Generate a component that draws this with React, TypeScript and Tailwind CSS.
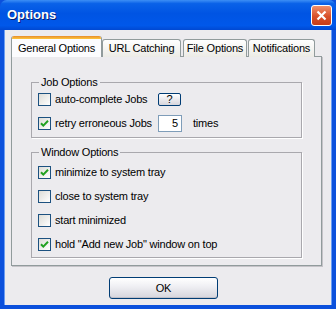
import React from 'react';

const font = { fontFamily: '"Liberation Sans", Arial, sans-serif' };

const Check: React.FC<{ checked?: boolean }> = ({ checked }) => (
  <span className="flex h-[13px] w-[13px] shrink-0 items-center justify-center border border-[#1c5180] bg-[linear-gradient(135deg,#dcdcd7_0%,#ffffff_100%)]">
    {checked && (
      <svg width="9" height="9" viewBox="0 0 9 9">
        <path d="M1 4.2 L3.3 6.6 L8 1.8" stroke="#21a121" strokeWidth="2" fill="none" />
      </svg>
    )}
  </span>
);

const Row: React.FC<{ checked?: boolean; label: string; children?: React.ReactNode }> = ({ checked, label, children }) => (
  <div className="flex h-[20px] items-center">
    <Check checked={checked} />
    <span className="ml-[4px] w-[103px] whitespace-nowrap">{label}</span>
    {children}
  </div>
);

const Tab: React.FC<{ label: string; width: string }> = ({ label, width }) => (
  <div className={`${width} flex h-[18px] items-center justify-center rounded-t-[3px] border border-b-0 border-[#919b9c] bg-[linear-gradient(#ffffff,#ecebe6)]`}>
    {label}
  </div>
);

export default function App() {
  return (
    <div className="flex h-[309px] w-[336px] flex-col bg-[#0b50dc] text-[11px] tracking-[-0.2px] text-black" style={font}>
      {/* title bar */}
      <div className="flex h-[30px] shrink-0 items-center justify-between rounded-t-[7px] bg-[linear-gradient(#3d8ff5_0%,#0a62e8_12%,#0054e3_45%,#0058ea_85%,#0048d2_100%)] pl-[7px] pr-[4px]">
        <span className="text-[13px] font-bold tracking-normal text-white [text-shadow:1px_1px_0_#0a1f6e]">Options</span>
        <div className="flex h-[21px] w-[21px] items-center justify-center rounded-[3px] border border-white bg-[linear-gradient(#f0906c,#d8502a_55%,#c63d1a)]">
          <svg width="11" height="11" viewBox="0 0 11 11">
            <path d="M1.5 1.5 L9.5 9.5 M9.5 1.5 L1.5 9.5" stroke="#fff" strokeWidth="2.2" />
          </svg>
        </div>
      </div>

      {/* body */}
      <div className="mx-[4px] mb-[4px] flex flex-1 flex-col border-l border-r border-[#6a9cf2] bg-[#ecebee] pl-[6px] pr-[9px] pt-[6px]">
        {/* tabs */}
        <div className="relative z-10 -mb-px flex h-[21px] items-end">
          <div className="flex h-[21px] w-[91px] flex-col overflow-hidden rounded-t-[3px] border-x border-[#919b9c] bg-[#fcfcfe]">
            <div className="h-[3px] bg-[linear-gradient(#e68b2c,#ffc83c)]" />
            <div className="flex flex-1 items-center justify-center">General Options</div>
          </div>
          <Tab label="URL Catching" width="w-[79px]" />
          <div className="w-[2px]" />
          <Tab label="File Options" width="w-[64px]" />
          <div className="w-[1px]" />
          <Tab label="Notifications" width="w-[67px]" />
        </div>

        {/* panel */}
        <div className="flex flex-col border border-[#919b9c] bg-[#ecebee] px-[19px] pb-[7px] pt-[19px] shadow-[1px_1px_0_#c5c3c8]">
          <fieldset className="border border-[#a9a8ad] px-[6px] pb-[4px] shadow-[1px_1px_0_#ffffff]">
            <legend className="ml-[1px] px-[2px] leading-[13px]">Job Options</legend>
            <Row label="auto-complete Jobs">
              <div className="flex h-[13px] w-[23px] items-center justify-center rounded-[2px] border border-[#003c74] bg-[linear-gradient(#ffffff,#d6d5dc)] text-[11px] leading-none">
                ?
              </div>
            </Row>
            <div className="mt-[4px]">
              <Row checked label="retry erroneous Jobs">
                <div className="flex h-[17px] w-[24px] items-center justify-end border border-[#7f9db9] bg-white pr-[3px]">5</div>
                <span className="ml-[11px]">times</span>
              </Row>
            </div>
          </fieldset>

          <fieldset className="mt-[8px] flex flex-col gap-[4px] border border-[#a9a8ad] px-[6px] pb-[3px] pt-[3px] shadow-[1px_1px_0_#ffffff]">
            <legend className="ml-[1px] px-[2px] leading-[13px]">Window Options</legend>
            <Row checked label="minimize to system tray" />
            <Row label="close to system tray" />
            <Row label="start minimized" />
            <Row checked label={'hold "Add new Job" window on top'} />
          </fieldset>
        </div>

        {/* footer */}
        <div className="flex flex-1 items-start justify-center pr-[6px] pt-[11px]">
          <div className="flex h-[22px] w-[109px] items-center justify-center rounded-[3px] border border-[#003c74] bg-[linear-gradient(#ffffff_0%,#f0f0f4_40%,#d6d5dc_100%)] shadow-[inset_0_-1px_0_#c0bfc8]">
            OK
          </div>
        </div>
      </div>
    </div>
  );
}
